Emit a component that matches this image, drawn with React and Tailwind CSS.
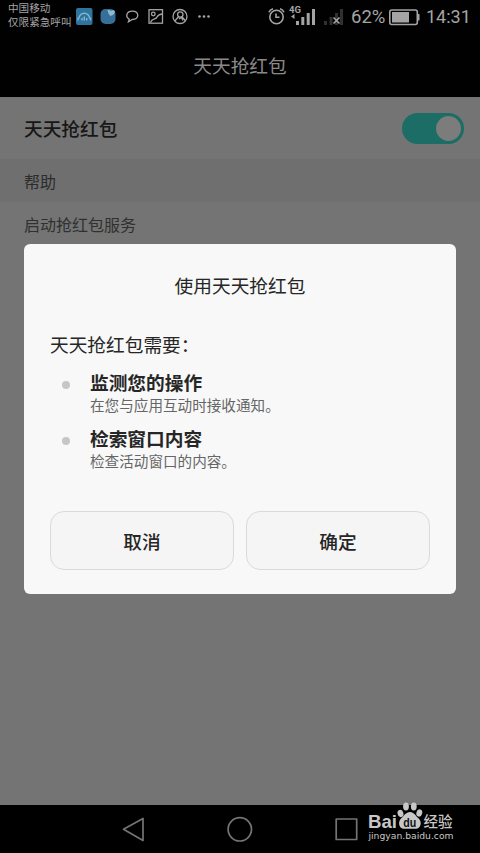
import React from "react";

const permissions = [
    { title: "监测您的操作", detail: "在您与应用互动时接收通知。" },
    { title: "检索窗口内容", detail: "检查活动窗口的内容。" },
];

const StatusBar = () => (
    <div className="flex h-[34px] shrink-0 items-start text-[#a4a4a4]">
        <div className="ml-2 mt-[1px] w-[67px] whitespace-nowrap text-[10.6px] leading-[14px]">
            <p>中国移动</p>
            <p>仅限紧急呼叫</p>
        </div>

        {/* Notification icons */}
        <svg className="h-[34px] w-[140px] shrink-0" viewBox="75 0 140 34" fill="none" stroke="#a4a4a4" strokeWidth="1.3">
            <rect x="76" y="8" width="16.500" height="17" rx="2" fill="#2f749f" stroke="none" />
            <path d="M79 18.500a5.300 5.300 0 0 1 10.600 0" stroke="#86b5d0" strokeWidth="1.400" />
            <path d="M78 17.500v3M90.500 17.500v3M82 18v2.500M84.300 16.500v4M86.700 18v2.500" stroke="#86b5d0" strokeWidth="1.400" />
            <rect x="100.500" y="9" width="15" height="15" rx="5" fill="#386f98" stroke="none" />
            <path d="M107.500 10q2.500-.5 3.500 1 2-1.500 4 0-.3 4-4.500 5-2.500-2-3-6z" fill="#8fb9d2" stroke="none" />
            <path d="M129.300 19.200c-4.400-2.700-2.700-8 2.900-8 7.400 0 7.400 8.300 0 8.300l-3.700 2.200z" />
            <rect x="149" y="9.700" width="13.500" height="13.500" />
            <circle cx="153.300" cy="14" r="1.800" />
            <path d="M150.500 22.500c1.500-5 5.500-2.500 6.500-5.500q1.500-2.800 5.500-3" />
            <circle cx="180" cy="16.500" r="7" />
            <circle cx="180.300" cy="14.500" r="2.700" />
            <path d="M178.500 16.700l-3.500 4M182 16.700l3.500 4.300M179 19l2.500-1.500 1.500 3" />
            <g fill="#a4a4a4" stroke="none">
                <circle cx="199.500" cy="16.500" r="1.300" />
                <circle cx="204" cy="16.500" r="1.300" />
                <circle cx="208.500" cy="16.500" r="1.300" />
            </g>
        </svg>

        {/* Alarm and signal */}
        <svg className="ml-[52px] h-[34px] w-[79px] shrink-0" viewBox="267 0 79 34" fill="none" stroke="#a4a4a4" strokeWidth="1.600">
            <circle cx="276.500" cy="17" r="6.700" />
            <path d="M276 13.500V17.200h3.500M269 12.300q1-2.800 4-3.500M284 12.300q-1-2.800-4-3.500" />
            <text x="289" y="12.500" fontSize="9.500" fontWeight="700" fill="#a4a4a4" stroke="none" className="font-['Roboto',sans-serif]">4G</text>
            <path d="M294.500 14v5l-3.500-2.500z" fill="#a4a4a4" stroke="none" />
            <g fill="#a4a4a4" stroke="none">
                <rect x="296" y="21" width="3" height="4" />
                <rect x="301.300" y="17" width="3" height="8" />
                <rect x="306.700" y="13" width="3" height="12" />
                <rect x="312" y="9" width="3" height="16" />
            </g>
            <g fill="#303030" stroke="none">
                <rect x="324" y="21" width="3" height="4" />
                <rect x="329.500" y="17" width="3" height="8" />
                <rect x="335" y="13" width="3" height="12" />
                <rect x="340" y="9" width="3" height="16" />
            </g>
            <path d="M333.500 17.500l6 6M339.500 17.500l-6 6" />
        </svg>

        <span className="ml-[5px] mt-[5px] w-[38px] font-['Roboto',sans-serif] text-[18.5px] leading-6">62%</span>
        <svg className="h-[34px] w-[31px] shrink-0" viewBox="388 0 31 34">
            <rect x="388.800" y="10" width="27.500" height="14.500" rx="2" fill="none" stroke="#a4a4a4" strokeWidth="1.600" />
            <rect x="391" y="12" width="17" height="10.500" fill="#a4a4a4" />
            <rect x="416.500" y="14" width="2" height="6.500" fill="#a4a4a4" />
        </svg>
        <span className="ml-[6px] mt-[5px] font-['Roboto',sans-serif] text-[18px] leading-6">14:31</span>
    </div>
);

const BaiduMark = () => (
    <svg className="h-[46px] w-[94px]" viewBox="364 798 94 46" fill="#c8c8c8">
        <text x="368" y="827.500" fontSize="18.500" fontWeight="700" textLength="29" lengthAdjust="spacingAndGlyphs" className="font-['Liberation_Sans',sans-serif]">Bai</text>
        <ellipse cx="400.500" cy="813.500" rx="2.900" ry="3.700" transform="rotate(-15 400.500 813.500)" />
        <ellipse cx="406" cy="806.500" rx="2.900" ry="4" />
        <ellipse cx="413.800" cy="806.500" rx="2.900" ry="4" />
        <ellipse cx="419.300" cy="813" rx="2.900" ry="3.700" transform="rotate(15 419.300 813)" />
        <path d="M410 812c4.200 0 5.500 4 8.700 6.500 3.600 3.500 2.300 10-2.700 10.300-4 .2-8-.3-12 0-5-.2-6.500-6.500-3-10.300 3-2.500 4.800-6.500 9-6.500z" />
        <text x="403.300" y="826.500" fontSize="12" fontWeight="700" fill="#111" textLength="13" lengthAdjust="spacingAndGlyphs" className="font-['Liberation_Sans',sans-serif]">du</text>
        <text x="423.500" y="827" fontSize="14.500" fontWeight="500" className="font-['Noto_Sans_CJK_SC',sans-serif]">经验</text>
        <text x="368.500" y="839" fontSize="9.300" textLength="85" lengthAdjust="spacingAndGlyphs" className="font-['DejaVu_Sans',sans-serif]">jingyan.baidu.com</text>
    </svg>
);

const NavBar = () => (
    <div className="relative h-12 shrink-0 bg-black">
        <svg className="h-12 w-full" viewBox="0 805 480 48" fill="none" stroke="#747474" strokeWidth="1.700" strokeLinejoin="round">
            <path d="M123.500 829.300L143 818.500v22z" />
            <circle cx="239.800" cy="829.300" r="11.700" />
            <rect x="336.200" y="819" width="20.500" height="20.500" />
        </svg>
        <div className="absolute -top-[7px] left-[364px]">
            <BaiduMark />
        </div>
    </div>
);

const Dialog = () => (
    <div className="absolute left-6 top-[244px] flex h-[350px] w-[432px] flex-col rounded-[6px] bg-[#f8f8f8] px-[26px] text-[#262626]">
        <h2 className="mt-[27px] text-center text-[18.7px] leading-7">使用天天抢红包</h2>
        <p className="mt-[31px] text-[18.7px] leading-7">天天抢红包需要：</p>

        <ul className="mt-[11px] space-y-[8px]">
            {permissions.map((item) => (
                <li key={item.title} className="flex h-12">
                    <span className="ml-3 mt-[12px] size-2 shrink-0 rounded-full bg-[#c6c6c6]" />
                    <div className="ml-5">
                        <p className="text-[18.7px] font-bold leading-[26px]">{item.title}</p>
                        <p className="text-[14.6px] leading-5 text-[#666]">{item.detail}</p>
                    </div>
                </li>
            ))}
        </ul>

        <div className="mt-auto mb-6 flex gap-3">
            <button className="h-[59px] flex-1 rounded-[14px] border border-[#dadada] bg-[#f5f5f5] pt-px text-[18.7px] font-medium">取消</button>
            <button className="h-[59px] flex-1 rounded-[14px] border border-[#dadada] bg-[#f5f5f5] pt-px text-[18.7px] font-medium">确定</button>
        </div>
    </div>
);

export default function App() {
    return (
        <div className="relative flex h-[853px] w-[480px] flex-col overflow-hidden bg-[#747474] font-['Noto_Sans_CJK_SC',sans-serif]">
            <header className="h-[97px] shrink-0 bg-[#010102]">
                <StatusBar />
                <h1 className="mt-[17px] text-center text-[18.7px] leading-7 text-[#8a8a8a]">天天抢红包</h1>
            </header>

            <main className="flex-1">
                <div className="flex h-[62px] items-center justify-between pl-6 pr-4">
                    <span className="text-[18.7px] font-medium text-[#171717]">天天抢红包</span>
                    <div className="flex h-[31px] w-[62px] items-center justify-end rounded-full bg-[#1b6d65] pr-[3px]">
                        <span className="size-[25px] rounded-full bg-[#7c7c7c]" />
                    </div>
                </div>
                <div className="flex h-[43px] items-center bg-[#6f6f6f] px-6 text-[16px] text-[#2c2c2c]">帮助</div>
                <p className="px-6 pt-[10px] text-[16px] leading-6 text-[#303030]">启动抢红包服务</p>
            </main>

            <NavBar />
            <Dialog />
        </div>
    );
}
